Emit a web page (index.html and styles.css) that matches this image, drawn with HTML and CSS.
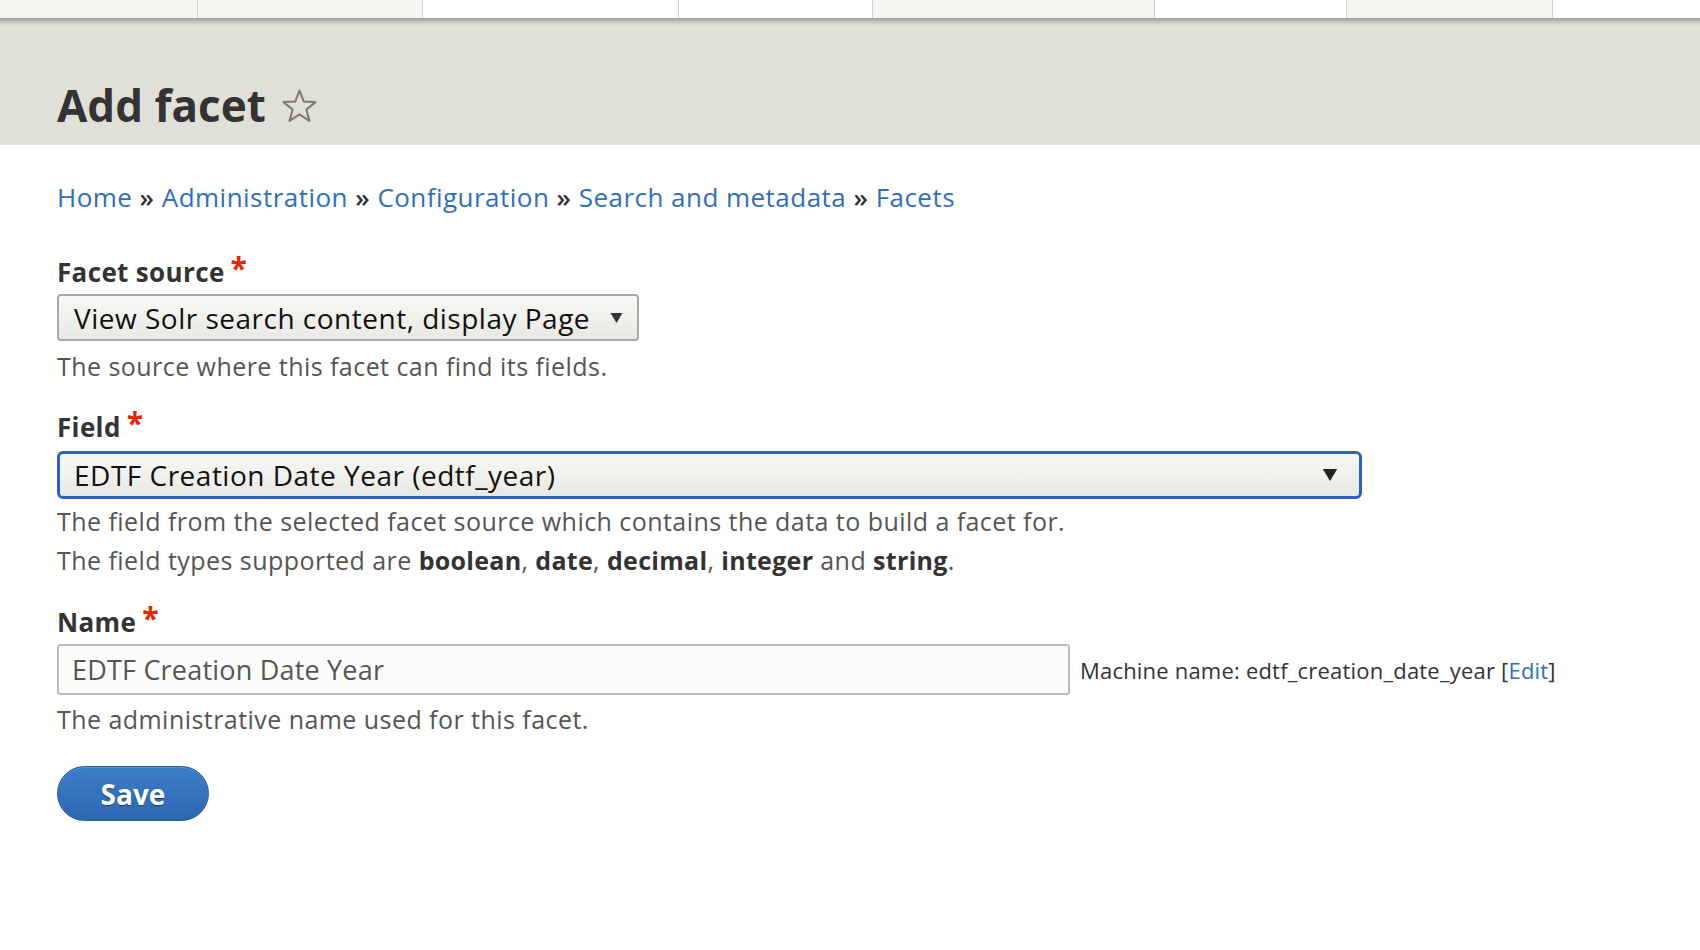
FILE: index.html
```html
<!DOCTYPE html>
<html lang="en">
<head>
<meta charset="utf-8">
<title>Add facet</title>
<link rel="stylesheet" href="styles.css">
</head>
<body>
<div class="tabs">
  <div class="tab tab-light"></div>
  <div class="tab tab-light"></div>
  <div class="tab"></div>
  <div class="tab"></div>
  <div class="tab tab-light"></div>
  <div class="tab"></div>
  <div class="tab tab-light"></div>
  <div class="tab tab-last"></div>
</div>
<header class="page-header">
  <h1 class="page-title">Add facet
    <svg class="star" viewBox="0 0 36 36" width="37" height="37" aria-hidden="true">
      <path d="M18 2.5 L22.2 13.2 L33.5 13.7 L24.7 20.9 L27.7 32 L18 25.7 L8.3 32 L11.3 20.9 L2.5 13.7 L13.8 13.2 Z" fill="none" stroke="#7c7b6c" stroke-width="2" stroke-linejoin="round"/>
    </svg>
  </h1>
</header>
<main class="content">
  <nav class="breadcrumb">
    <a href="#">Home</a> <span class="sep">»</span> <a href="#">Administration</a> <span class="sep">»</span> <a href="#">Configuration</a> <span class="sep">»</span> <a href="#">Search and metadata</a> <span class="sep">»</span> <a href="#">Facets</a>
  </nav>

  <div class="form-item">
    <label class="label">Facet source<span class="req">*</span></label>
    <div class="select select-source">
      <span class="select-text">View Solr search content, display Page</span>
      <svg class="arrow" viewBox="0 0 12 10" width="13" height="10" aria-hidden="true"><path d="M0 0 H12 L6 10 Z" fill="#333"/></svg>
    </div>
    <div class="desc">The source where this facet can find its fields.</div>
  </div>

  <div class="form-item">
    <label class="label">Field<span class="req">*</span></label>
    <div class="select select-field">
      <span class="select-text">EDTF Creation Date Year (edtf_year)</span>
      <svg class="arrow" viewBox="0 0 12 10" width="16" height="12" aria-hidden="true"><path d="M0 0 H12 L6 10 Z" fill="#222"/></svg>
    </div>
    <div class="desc desc-field">The field from the selected facet source which contains the data to build a facet for.</div>
    <div class="desc">The field types supported are <strong>boolean</strong>, <strong>date</strong>, <strong>decimal</strong>, <strong>integer</strong> and <strong>string</strong>.</div>
  </div>

  <div class="form-item form-item-name">
    <label class="label">Name<span class="req">*</span></label>
    <div class="name-row">
      <div class="text-input">EDTF Creation Date Year</div>
      <span class="machine">Machine name: edtf_creation_date_year [<a href="#">Edit</a>]</span>
    </div>
    <div class="desc desc-name">The administrative name used for this facet.</div>
  </div>

  <div class="actions">
    <button class="button">Save</button>
  </div>
</main>
</body>
</html>
```
FILE: styles.css
```css
html, body {
  margin: 0;
  padding: 0;
  background: #fff;
}
body {
  font-family: "Open Sans", "Noto Sans", sans-serif;
  color: #333;
}
.tabs {
  display: grid;
  grid-template-columns: 198px 225px 256px 194px 282px 192px 206px 1fr;
  height: 18px;
}
.tab {
  background: #fff;
  border-right: 1px solid #cfcfcb;
}
.tab-light {
  background: #f4f5f0;
}
.tab-last {
  border-right: none;
}
.page-header {
  background: linear-gradient(#9e9e9b 0, #b9b9b3 3px, #d8d8d0 6px, #e0e0d8 8px);
  height: 127px;
  box-sizing: border-box;
  padding: 61px 0 0 57px;
}
.page-title {
  margin: 0;
  font-size: 44px;
  line-height: 52px;
  font-weight: 700;
  color: #333;
  display: flex;
  align-items: center;
  gap: 15px;
}
.star {
  display: block;
  margin-top: 2px;
}
.content {
  padding: 34px 0 0 57px;
}
.breadcrumb {
  font-size: 26px;
  letter-spacing: 0.47px;
  line-height: 36px;
  color: #333;
}
.breadcrumb a {
  color: #2f6fba;
  text-decoration: none;
}
.sep {
  color: #333;
  font-weight: 600;
}
.form-item {
  margin-top: 38px;
}
.form-item + .form-item {
  margin-top: 22px;
}
.form-item-name {
  margin-top: 23px !important;
}
.label {
  display: block;
  font-size: 26px;
  letter-spacing: 0.35px;
  line-height: 36px;
  font-weight: 700;
  color: #333;
}
.req {
  color: #e62600;
  font-size: 30px;
  margin-left: 6px;
  position: relative;
  top: -3px;
}
.select {
  margin-top: 4px;
  box-sizing: border-box;
  display: flex;
  align-items: center;
  justify-content: space-between;
  height: 47px;
  border: 2px solid #a8a8a6;
  border-radius: 4px;
  background: linear-gradient(#f7f7f4, #e9e9e4);
  padding: 0 14px 0 15px;
  font-size: 28px;
  letter-spacing: 0.5px;
  color: #111;
}
.select-source {
  width: 582px;
}
.select-field {
  width: 1305px;
  height: 48px;
  margin-top: 6px;
  border: 3px solid #2b5fca;
  border-radius: 6px;
  padding: 0 21px 0 14px;
}
.desc {
  font-size: 25px;
  letter-spacing: 0.45px;
  line-height: 39px;
  color: #555;
  margin-top: 6px;
}
.desc + .desc {
  margin-top: 0;
}
.desc-field {
  margin-top: 3px;
}
.desc-name {
  margin-top: 5px;
}
.desc strong {
  color: #333;
  letter-spacing: 0.3px;
}
.name-row {
  margin-top: 4px;
  display: flex;
  align-items: center;
  gap: 10px;
}
.text-input {
  box-sizing: border-box;
  width: 1013px;
  height: 51px;
  border: 2px solid #bcbcb9;
  border-radius: 3px;
  background: #fcfcfa;
  padding: 0 13px;
  display: flex;
  align-items: center;
  font-size: 27px;
  letter-spacing: 0.2px;
  color: #555;
}
.machine {
  font-size: 22px;
  letter-spacing: 0.2px;
  color: #333;
}
.machine a {
  color: #2f6fba;
  text-decoration: none;
}
.actions {
  margin-top: 27px;
}
.button {
  box-sizing: border-box;
  width: 152px;
  height: 55px;
  border: 1px solid #2a5a96;
  border-radius: 28px;
  background: linear-gradient(#3c7fc8, #2c67b1);
  color: #fff;
  font-family: "Open Sans", "Noto Sans", sans-serif;
  font-size: 28px;
  font-weight: 700;
  text-shadow: 0 1px 1px #1b3f6e;
  padding: 0;
  box-shadow: inset 0 1px 0 rgba(255,255,255,0.15);
}
```
